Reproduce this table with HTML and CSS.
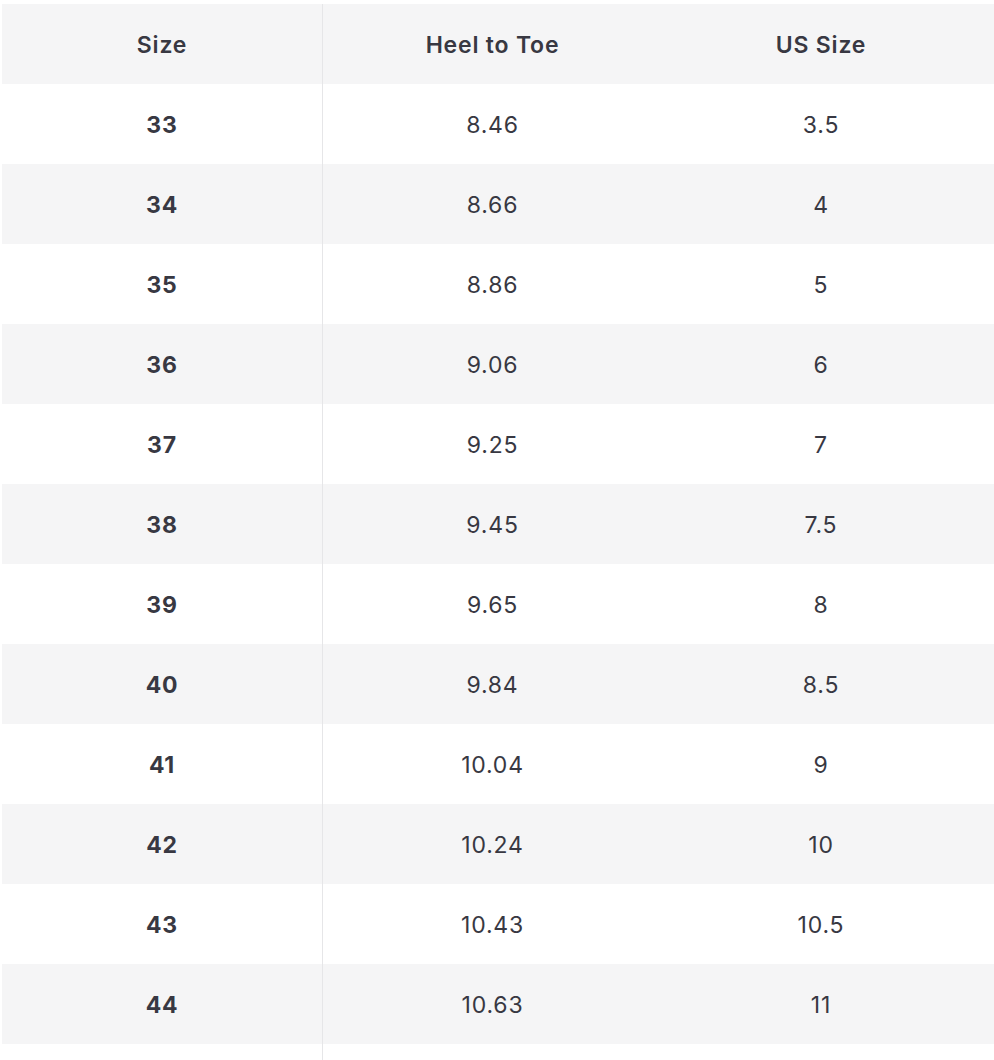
FILE: index.html
```html
<!DOCTYPE html>
<html>
<head>
<meta charset="utf-8">
<link rel="stylesheet" href="styles.css">
</head>
<body>
<div class="table">
  <div class="row head"><div class="cell c1">Size</div><div class="cell c2">Heel to Toe</div><div class="cell c3">US Size</div></div>
  <div class="row"><div class="cell c1">33</div><div class="cell c2">8.46</div><div class="cell c3">3.5</div></div>
  <div class="row"><div class="cell c1">34</div><div class="cell c2">8.66</div><div class="cell c3">4</div></div>
  <div class="row"><div class="cell c1">35</div><div class="cell c2">8.86</div><div class="cell c3">5</div></div>
  <div class="row"><div class="cell c1">36</div><div class="cell c2">9.06</div><div class="cell c3">6</div></div>
  <div class="row"><div class="cell c1">37</div><div class="cell c2">9.25</div><div class="cell c3">7</div></div>
  <div class="row"><div class="cell c1">38</div><div class="cell c2">9.45</div><div class="cell c3">7.5</div></div>
  <div class="row"><div class="cell c1">39</div><div class="cell c2">9.65</div><div class="cell c3">8</div></div>
  <div class="row"><div class="cell c1">40</div><div class="cell c2">9.84</div><div class="cell c3">8.5</div></div>
  <div class="row"><div class="cell c1">41</div><div class="cell c2">10.04</div><div class="cell c3">9</div></div>
  <div class="row"><div class="cell c1">42</div><div class="cell c2">10.24</div><div class="cell c3">10</div></div>
  <div class="row"><div class="cell c1">43</div><div class="cell c2">10.43</div><div class="cell c3">10.5</div></div>
  <div class="row"><div class="cell c1">44</div><div class="cell c2">10.63</div><div class="cell c3">11</div></div>
  <div class="row tail"><div class="cell c1"></div></div>
</div>
</body>
</html>
```
FILE: styles.css
```css
html, body {
  margin: 0;
  padding: 0;
  background: #ffffff;
  overflow: hidden;
  height: 1060px;
}
body {
  padding: 4px 0 0 2px;
  box-sizing: border-box;
  font-family: Inter, "Noto Sans", sans-serif;
  color: #383842;
}
.table {
  display: flex;
  flex-direction: column;
  width: 992px;
}
.row {
  display: flex;
  height: 80px;
  background: #ffffff;
}
.row:nth-child(odd) {
  background: #f5f5f6;
}
.row.tail {
  height: 20px;
  background: #ffffff;
}
.cell {
  display: flex;
  align-items: center;
  justify-content: center;
  font-size: 23px;
  font-weight: 400;
  letter-spacing: 0.8px;
  padding-top: 1px;
}
.c1 {
  width: 320px;
  border-right: 1px solid #e6e6e8;
  font-weight: 700;
}
.c2 {
  width: 339px;
}
.c3 {
  width: 318px;
}
.head .cell {
  font-weight: 600;
}
```
